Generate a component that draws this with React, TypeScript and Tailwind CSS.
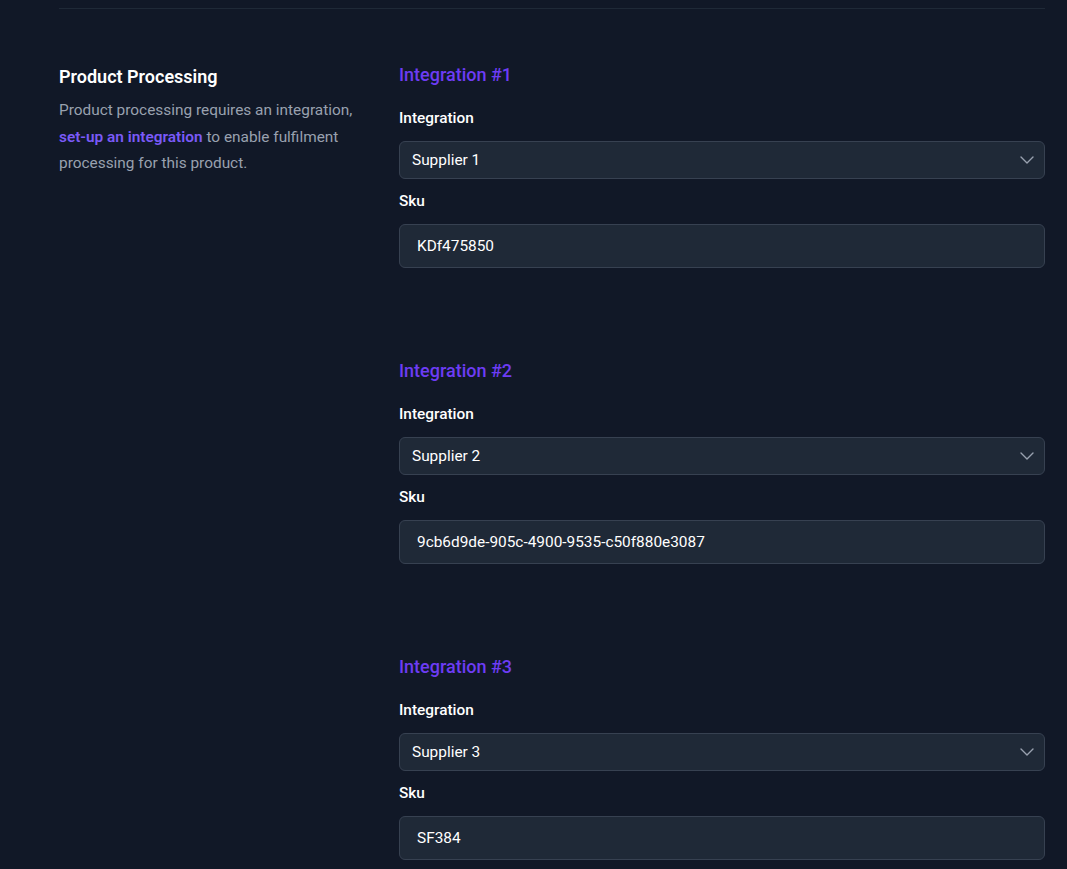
import { ChevronDown } from 'lucide-react';

const integrations = [
  { id: 1, supplier: 'Supplier 1', sku: 'KDf475850' },
  { id: 2, supplier: 'Supplier 2', sku: '9cb6d9de-905c-4900-9535-c50f880e3087' },
  { id: 3, supplier: 'Supplier 3', sku: 'SF384' },
];

function IntegrationBlock({ id, supplier, sku }: { id: number; supplier: string; sku: string }) {
  return (
    <div className="pb-[89px]">
      <h3 className="text-lg leading-7 font-medium text-[#6d3cf4]">Integration #{id}</h3>
      <label className="block mt-[19px] text-[15.4px] leading-5 font-medium text-white">Integration</label>
      <div className="relative mt-[13px]">
        <div className="flex items-center h-[38px] rounded-md border border-[#374151] bg-[#1f2937] px-3 pt-[2px] text-[15.4px] text-white">
          {supplier}
        </div>
        <ChevronDown className="absolute right-[6px] top-[7px] w-6 h-6 text-gray-400" strokeWidth={1.4} />
      </div>
      <label className="block mt-[12px] text-[15.4px] leading-5 font-medium text-white">Sku</label>
      <div className="mt-[13px] flex items-center h-[44px] rounded-md border border-[#374151] bg-[#1f2937] px-[17px] pt-[1px] text-[15.4px] text-white">
        {sku}
      </div>
    </div>
  );
}

export default function App() {
  return (
    <div className="min-h-screen bg-[#111827] pl-[59px] pr-[22px] pt-2" style={{ fontFamily: 'Roboto, "Noto Sans", sans-serif' }}>
      <div className="border-t border-[#1f2937]" />
      <div className="grid grid-cols-[307px_1fr] gap-x-[33px] pt-[52px]">
        <div>
          <h2 className="mt-[2px] text-lg leading-7 font-semibold text-white">Product Processing</h2>
          <p className="mt-[6px] text-[15.4px] leading-[26.6px] text-gray-400">
            Product processing requires an integration,{' '}
            <a href="#" className="font-semibold text-[#7a5af8]">set-up an integration</a> to enable fulfilment processing for this product.
          </p>
        </div>
        <div>
          {integrations.map(i => (
            <IntegrationBlock key={i.id} {...i} />
          ))}
        </div>
      </div>
    </div>
  );
}
